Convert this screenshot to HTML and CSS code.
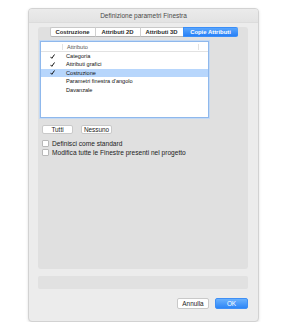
FILE: index.html
```html
<!DOCTYPE html>
<html lang="it">

<head>
    <meta charset="UTF-8">
    <meta name="viewport" content="width=device-width, initial-scale=1.0">
    <title>Definizione parametri Finestra</title>
    <link rel="stylesheet" href="styles.css">
</head>

<body>
    <div class="window">
        <div class="titlebar">Definizione parametri Finestra</div>

        <div class="content">
            <div class="tabpanel">
                <div class="tabs">
                    <div class="tab tab-1">Costruzione</div>
                    <div class="tab tab-2">Attributi 2D</div>
                    <div class="tab tab-3">Attributi 3D</div>
                    <div class="tab tab-4 selected">Copie Attributi</div>
                </div>

                <div class="list">
                    <div class="list-head">
                        <div class="col-check"></div>
                        <div class="col-name">Attributo</div>
                        <div class="col-end"></div>
                    </div>
                    <div class="row">
                        <div class="col-check"><svg class="tick" viewBox="0 0 6 6"><path d="M0.6 3.4 L2.2 5.2 L5.4 0.6" /></svg></div>
                        <div class="col-name">Categoria</div>
                    </div>
                    <div class="row">
                        <div class="col-check"><svg class="tick" viewBox="0 0 6 6"><path d="M0.6 3.4 L2.2 5.2 L5.4 0.6" /></svg></div>
                        <div class="col-name">Attributi grafici</div>
                    </div>
                    <div class="row active">
                        <div class="col-check"><svg class="tick" viewBox="0 0 6 6"><path d="M0.6 3.4 L2.2 5.2 L5.4 0.6" /></svg></div>
                        <div class="col-name">Costruzione</div>
                    </div>
                    <div class="row">
                        <div class="col-check"></div>
                        <div class="col-name">Parametri finestra d'angolo</div>
                    </div>
                    <div class="row">
                        <div class="col-check"></div>
                        <div class="col-name">Davanzale</div>
                    </div>
                </div>

                <div class="button-row">
                    <div class="btn small">Tutti</div>
                    <div class="btn small">Nessuno</div>
                </div>

                <label class="check"><span class="box"></span>Definisci come standard</label>
                <label class="check"><span class="box"></span>Modifica tutte le Finestre presenti nel progetto</label>
            </div>

            <div class="statusbar"></div>

            <div class="footer">
                <div class="btn cancel">Annulla</div>
                <div class="btn ok">OK</div>
            </div>
        </div>
    </div>
</body>

</html>
```

FILE: styles.css
```css
body {
    margin: 0;
    background-color: #ffffff;
    font-family: "Liberation Sans", Arial, sans-serif;
    color: #262626;
}

.window {
    width: 231px;
    height: 314px;
    margin: 8px 0 0 28px;
    box-sizing: border-box;
    background-color: #ececec;
    border: 1px solid #d2d2d2;
    border-radius: 4px;
    box-shadow: 0 1px 3px rgba(0, 0, 0, 0.12);
    overflow: hidden;
}

.titlebar {
    height: 13px;
    line-height: 13px;
    text-align: center;
    font-size: 6.5px;
    color: #4a4a4a;
    background: linear-gradient(#ebebeb, #e3e3e3);
    border-bottom: 1px solid #dcdcdc;
}

.content {
    padding: 0 10px 0 9px;
}

.tabpanel {
    margin-top: 8px;
    height: 242px;
    background-color: #e0e0e0;
    border-radius: 3px;
}

.tabs {
    display: flex;
    justify-content: center;
    margin: -4px 0 0 1px;
}

.tab {
    height: 8px;
    line-height: 8px;
    font-size: 5.9px;
    font-weight: bold;
    text-align: center;
    background-color: #ffffff;
    color: #2a2a2a;
    border-top: 1px solid #c8c8c8;
    border-bottom: 1px solid #b4b4b4;
    border-left: 1px solid #d0d0d0;
}

.tab-1 {
    width: 44px;
    border-radius: 2px 0 0 2px;
    border-left-color: #c8c8c8;
}

.tab-2 {
    width: 44px;
}

.tab-3 {
    width: 42px;
}

.tab-4 {
    width: 54px;
    border-radius: 0 2px 2px 0;
}

.tab.selected {
    background: linear-gradient(#5aa6fd, #2880f6);
    border-color: #3a8ef8;
    color: #ffffff;
}

.list {
    margin: 4px 0 0 2px;
    width: 169px;
    height: 77px;
    box-sizing: border-box;
    background-color: #ffffff;
    border: 1px solid #8fb8ec;
    box-shadow: 0 0 0 1px #c3d9f4;
    font-size: 5.6px;
}

.list-head {
    display: flex;
    height: 9px;
    line-height: 9px;
    border-bottom: 1px solid #e2e2e2;
    color: #555555;
}

.list-head .col-check {
    border-right: 1px solid #e2e2e2;
    height: 6px;
    margin-top: 1.5px;
}

.list-head .col-name {
    flex: 1;
    border-right: 1px solid #e2e2e2;
    height: 6px;
    line-height: 6px;
    margin-top: 1.5px;
}

.list-head .col-end {
    width: 9px;
}

.col-check {
    width: 21px;
    display: flex;
    justify-content: center;
    align-items: center;
}

.col-name {
    padding-left: 4px;
}

.row {
    display: flex;
    height: 8.4px;
    line-height: 8.4px;
    color: #111111;
}

.row.active {
    background-color: #b7d6fc;
}

.tick {
    width: 5px;
    height: 5px;
    margin-left: 1px;
}

.tick path {
    fill: none;
    stroke: #111111;
    stroke-width: 1.2;
}

.button-row {
    display: flex;
    gap: 8px;
    margin: 7px 0 0 4px;
}

.btn {
    height: 9px;
    line-height: 9px;
    box-sizing: border-box;
    text-align: center;
    font-size: 6.4px;
    background-color: #ffffff;
    border: 1px solid #c9c9c9;
    border-radius: 2px;
    color: #222222;
}

.btn.small {
    width: 31px;
    line-height: 7px;
}

.check {
    display: flex;
    align-items: center;
    margin-left: 4px;
    height: 9px;
    font-size: 6.6px;
    color: #222222;
}

.check:first-of-type {
    margin-top: 5px;
}

.box {
    width: 5px;
    height: 5px;
    margin-right: 3px;
    background-color: #ffffff;
    border: 1px solid #b9b9b9;
    border-radius: 1px;
}

.statusbar {
    margin-top: 7px;
    height: 13px;
    background-color: #e1e1e1;
    border-radius: 2px;
}

.footer {
    display: flex;
    justify-content: flex-end;
    gap: 6px;
    margin-top: 9px;
}

.btn.cancel {
    width: 32px;
    height: 11px;
    line-height: 9px;
}

.btn.ok {
    width: 33px;
    height: 11px;
    line-height: 9px;
    background: linear-gradient(#6ab1fd, #2d86f7);
    border-color: #3f8ff5;
    color: #ffffff;
}
```
